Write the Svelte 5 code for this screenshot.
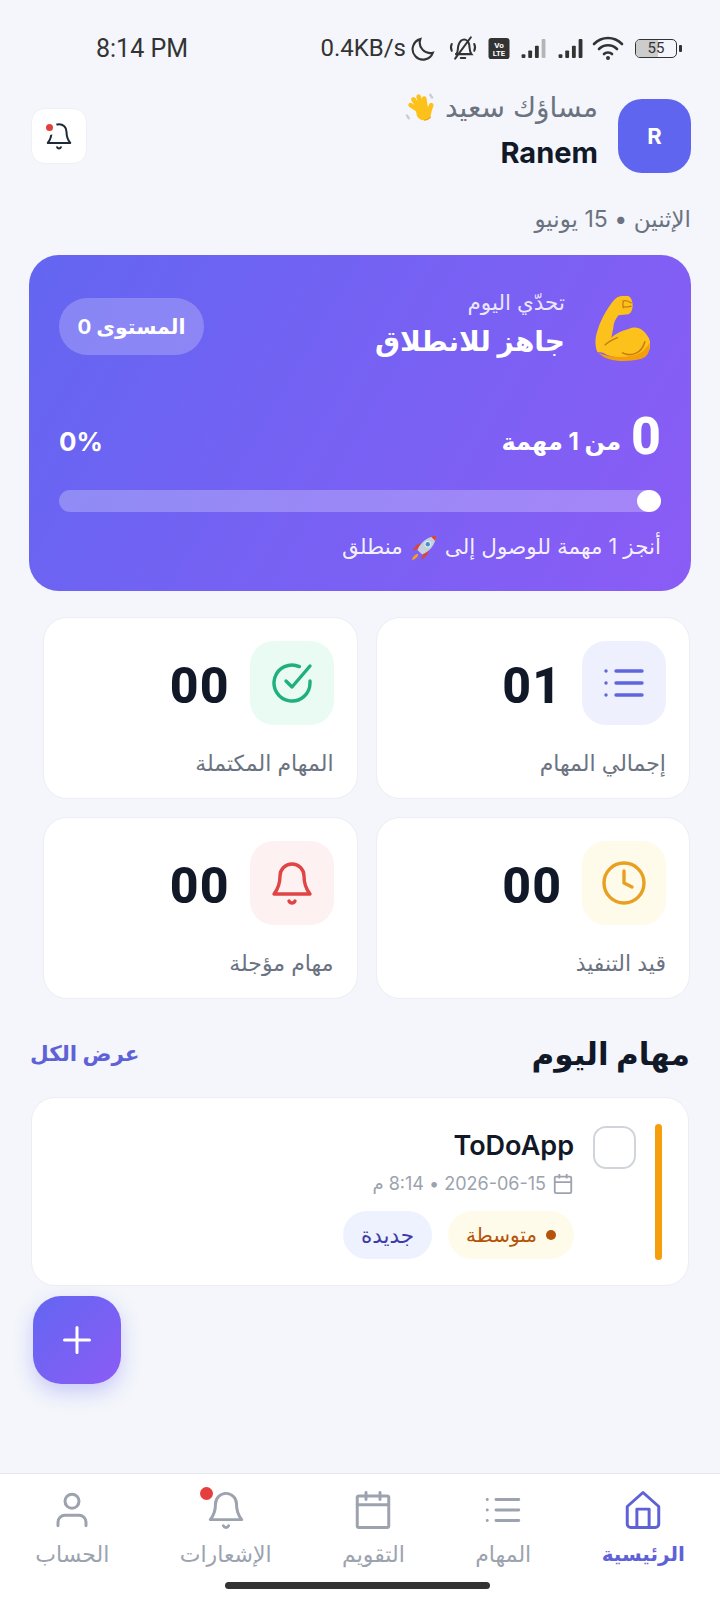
<script lang="ts">
	const stats = [
		{ label: 'إجمالي المهام', value: '01', tone: 'indigo', icon: 'list' },
		{ label: 'المهام المكتملة', value: '00', tone: 'green', icon: 'check' },
		{ label: 'قيد التنفيذ', value: '00', tone: 'amber', icon: 'clock' },
		{ label: 'مهام مؤجلة', value: '00', tone: 'red', icon: 'bell' }
	];

	const nav = [
		{ label: 'الرئيسية', icon: 'home', active: true },
		{ label: 'المهام', icon: 'list' },
		{ label: 'التقويم', icon: 'calendar' },
		{ label: 'الإشعارات', icon: 'bell', dot: true },
		{ label: 'الحساب', icon: 'user' }
	];
</script>

{#snippet glyph(name)}
	<svg class="glyph" viewBox="0 0 24 24" fill="none" stroke="currentColor" stroke-linecap="round" stroke-linejoin="round">
		{#if name === 'list'}
			<path d="M8 6h13M8 12h13M8 18h13" />
			<path d="M3 6h.01M3 12h.01M3 18h.01" />
		{:else if name === 'check'}
			<path d="M21 11v1a9 9 0 1 1-5.300-8.200" />
			<path d="M21 3.500 12 14l-3-3" />
		{:else if name === 'clock'}
			<circle cx="12" cy="12" r="10" />
			<path d="M12 6v6l4 2" />
		{:else if name === 'bell'}
			<path d="M18 8.500a6 6 0 0 0-12 0c0 4-1 6.500-3 9h18c-2-2.500-3-5-3-9z" />
			<path d="M10.500 21c.6 1.300 2.400 1.300 3 0" />
		{:else if name === 'home'}
			<path d="M3 10 12 2l9 8v10a2 2 0 0 1-2 2H5a2 2 0 0 1-2-2z" />
			<path d="M8.500 22V11.500h7V22" />
		{:else if name === 'calendar'}
			<rect x="3" y="4" width="18" height="18" rx="1" />
			<path d="M8 2v4M16 2v4M3 9h18" />
		{:else if name === 'user'}
			<path d="M20 21v-2a4 4 0 0 0-4-4H8a4 4 0 0 0-4 4v2" />
			<circle cx="12" cy="7" r="4" />
		{/if}
	</svg>
{/snippet}

{#snippet wave()}
	<svg class="emoji wave" viewBox="0 0 32 32" fill="none" stroke-linecap="round">
		<path d="M27 3l2 3M2 25l2 3" stroke="#c4cdd8" stroke-width="2.500" />
		<g stroke="#fcc21b" stroke-width="5">
			<path d="M17 21 6 14M17 19 9 8M19 18 14.500 5M22 18 20.500 7M25 23l3-9" />
		</g>
		<circle cx="20" cy="22" r="8" fill="#fcc21b" />
		<path d="M27 27c-2 2-4 3-6 3" stroke="#f0a30a" stroke-width="1.500" />
	</svg>
{/snippet}

{#snippet rocket()}
	<svg class="emoji rocket" viewBox="0 0 32 32">
		<path d="M9 17l-6 2 6-7 5-1zM15 23l-2 6 7-6 1-5z" fill="#d9453a" />
		<path d="M9 22c-3 1-5 3-6 7 4-1 6-3 7-6z" fill="#f7a21b" />
		<path d="M9 18C13 9 20 4 29 3c-1 9-6 16-15 20z" fill="#c3d1de" />
		<path d="M23 3.700c1.500 1 3.500 3 5 5 .5-2 .9-3.600 1-5.700-2 .1-4 .3-6 .7z" fill="#d9453a" />
		<circle cx="20" cy="12" r="3" fill="#4a90c8" stroke="#fff" stroke-width="1" />
	</svg>
{/snippet}

<div class="page" dir="rtl">
	<div class="status" dir="ltr">
		<span class="time">8:14 PM</span>
		<div class="status-right">
			<span class="speed">0.4KB/s</span>
			<svg class="st moon" viewBox="0 0 24 24" fill="none" stroke="#333" stroke-width="2"><path d="M9 3a10 10 0 1 0 12 13A10 10 0 0 1 9 3z" /></svg>
			<svg class="st mute" viewBox="0 0 28 24" fill="none" stroke="#333" stroke-width="1.800" stroke-linecap="round"><path d="M8 17c2-2 1-5 2-8s3-5 5-5 4 2 4.500 4.500 0 6 2 8.500H7zM12 20.500h4M21 2 7 21M4 8c-1 2-1 4 0 6M24 8c1 2 1 4 0 6" /></svg>
			<svg class="st volte" viewBox="0 0 22 22"><rect width="22" height="22" rx="3" fill="#333" /><text x="11" y="10" font-size="8.500" font-weight="700" text-anchor="middle" fill="#fff" font-family="Roboto">Vo</text><text x="11" y="19" font-size="8" font-weight="700" text-anchor="middle" fill="#fff" font-family="Roboto">LTE</text></svg>
			<svg class="st sig" viewBox="0 0 26 22" fill="#333"><rect x="0" y="17" width="4" height="4" rx="1" /><rect x="7" y="13" width="4" height="8" rx="1" /><rect x="14" y="8" width="4" height="13" rx="1" /><rect x="21" y="1" width="4" height="20" rx="1" fill="#b5b5b5" /></svg>
			<svg class="st sig" viewBox="0 0 26 22" fill="#333"><rect x="0" y="17" width="4" height="4" rx="1" /><rect x="7" y="13" width="4" height="8" rx="1" /><rect x="14" y="8" width="4" height="13" rx="1" /><rect x="21" y="1" width="4" height="20" rx="1" /></svg>
			<svg class="st wifi" viewBox="0 0 32 26" fill="none" stroke="#333" stroke-width="2.600" stroke-linecap="round"><path d="M2 9c8-8 20-8 28 0M7 14c5-5 13-5 18 0M12 19c2-2 6-2 8 0" /><circle cx="16" cy="23" r="2" fill="#333" stroke="none" /></svg>
			<div class="battery">
				<div class="cell"><span class="charge"></span><span class="pct">55</span></div>
				<span class="nub"></span>
			</div>
		</div>
	</div>

	<header class="top">
		<div class="avatar">R</div>
		<div class="hello">
			<div class="greet">مساؤك سعيد {@render wave()}</div>
			<div class="name">Ranem</div>
		</div>
		<button class="bell-btn" aria-label="الإشعارات">
			{@render glyph('bell')}
			<span class="bell-dot"></span>
		</button>
	</header>

	<p class="date">الإثنين • 15 يونيو</p>

	<section class="hero">
		<div class="hero-top">
			<svg class="muscle" viewBox="9 10 55 66">
				<path d="M12 66C10 60 10 55 11 50 13 42 17 30 27 17 30 13 33 11 36 11h7c3 2 4 6 4 9 0 4-1 7-4 9l-10 1c-3 4-5 8-5 12l-2 10c3-3 7-5 12-7 4-1 7-3 11-3 6 0 10 4 13 9 2 3 3 7 2 11-1 6-6 8-13 9-13 2-26 1-33-4z" fill="#fcc21b" />
				<path d="M12 66c8 5 20 6 33 4 6-1 12-3 15-8 2-2 3-3 3-6 1 3 1 6 0 9-1 6-6 8-13 9-13 2-26 1-33-4z" fill="#f59e0b" />
				<path d="M37 16c3-1 6 0 9 2M37 22c3 0 6 0 9-1M38 16c-1 2-1 4 0 7" stroke="#c97d10" stroke-width="1.200" fill="none" />
				<path d="M20 59c3-3 7-5 12-7M37 67c8 4 19 1 22-11" stroke="#c97d10" stroke-width="1.500" fill="none" stroke-linecap="round" />
			</svg>
			<div class="hero-title">
				<div class="hero-kicker">تحدّي اليوم</div>
				<div class="hero-head">جاهز للانطلاق</div>
			</div>
			<span class="level">المستوى 0</span>
		</div>

		<div class="hero-count">
			<div class="count"><b>0</b> <span>من 1 مهمة</span></div>
			<div class="percent" dir="ltr">0%</div>
		</div>

		<div class="track"><span class="knob"></span></div>

		<p class="hero-note">أنجز 1 مهمة للوصول إلى {@render rocket()} منطلق</p>
	</section>

	<section class="stats">
		{#each stats as s}
			<div class="stat">
				<div class="stat-row">
					<div class="stat-icon {s.tone}">{@render glyph(s.icon)}</div>
					<div class="stat-value" dir="ltr">{s.value}</div>
				</div>
				<div class="stat-label">{s.label}</div>
			</div>
		{/each}
	</section>

	<div class="section-head">
		<h2>مهام اليوم</h2>
		<span class="see-all">عرض الكل</span>
	</div>

	<div class="task">
		<span class="task-bar"></span>
		<span class="task-check"></span>
		<div class="task-body">
			<div class="task-title">ToDoApp</div>
			<div class="task-meta">
				<svg class="cal" viewBox="0 0 24 24" fill="none" stroke="currentColor" stroke-width="2"><rect x="3" y="4" width="18" height="18" rx="1.500" /><path d="M8 1v5M16 1v5M3 10h18" /></svg>
				<span>2026-06-15 • 8:14 م</span>
			</div>
			<div class="task-tags">
				<span class="tag medium"><i></i>متوسطة</span>
				<span class="tag fresh">جديدة</span>
			</div>
		</div>
	</div>

	<button class="fab" aria-label="إضافة">
		<svg viewBox="0 0 28 28" fill="none" stroke="#fff" stroke-width="3" stroke-linecap="round"><path d="M14 1.500v25M1.500 14h25" /></svg>
	</button>

	<nav class="nav">
		{#each nav as n}
			<div class="nav-item" class:active={n.active}>
				<div class="nav-icon">
					{@render glyph(n.icon)}
					{#if n.dot}<span class="nav-dot"></span>{/if}
				</div>
				<span class="nav-label">{n.label}</span>
			</div>
		{/each}
		<span class="home-bar"></span>
	</nav>
</div>

<style>
	:global(body) {
		margin: 0;
		background: #f4f6fb;
	}

	.page {
		position: relative;
		width: 720px;
		height: 1600px;
		overflow: hidden;
		background: #f4f6fb;
		font-family: Inter, 'DejaVu Sans', sans-serif;
		color: #111827;
	}

	.status {
		display: flex;
		justify-content: space-between;
		align-items: center;
		height: 30px;
		padding: 33px 38px 0 96px;
		font-family: Roboto, sans-serif;
		font-size: 24px;
		color: #333;
	}

	.time {
		font-size: 25px;
	}

	.status-right {
		display: flex;
		align-items: center;
		gap: 5px;
	}

	.st { display: block; }
	.moon { width: 25px; height: 25px; margin-right: 5px; }
	.mute { width: 34px; height: 27px; margin-right: 3px; }
	.volte { width: 22px; height: 21px; margin-right: 3px; }
	.sig { width: 32px; height: 21px; }
	.wifi { width: 32px; height: 26px; margin-right: 6px; }

	.battery {
		display: flex;
		align-items: center;
		gap: 2px;
	}

	.cell {
		position: relative;
		width: 40px;
		height: 17px;
		border: 1.500px solid #333;
		border-radius: 5px;
		overflow: hidden;
	}

	.charge {
		position: absolute;
		inset: 0 auto 0 0;
		width: 55%;
		background: #ccc;
	}

	.pct {
		position: relative;
		display: block;
		text-align: center;
		font-size: 15px;
		line-height: 17px;
	}

	.nub {
		width: 3px;
		height: 7px;
		background: #333;
		border-radius: 1px;
	}

	.top {
		display: flex;
		align-items: center;
		height: 74px;
		margin-top: 36px;
		padding: 0 29px 0 31px;
	}

	.avatar {
		display: flex;
		align-items: center;
		justify-content: center;
		width: 73px;
		height: 74px;
		border-radius: 24px;
		background: #5f65ee;
		color: #fff;
		font-weight: 700;
		font-size: 22px;
	}

	.hello {
		flex: 1;
		margin-right: 20px;
	}

	.greet {
		display: flex;
		align-items: center;
		gap: 9px;
		margin-top: -10px;
		font-size: 28px;
		line-height: 28px;
		color: #6b7280;
	}

	.emoji {
		display: inline-block;
		vertical-align: middle;
	}

	.wave {
		width: 32px;
		height: 30px;
	}

	.name {
		margin-top: 13px;
		font-size: 29px;
		line-height: 36px;
		font-weight: 700;
		direction: rtl;
	}

	.bell-btn {
		position: relative;
		display: flex;
		align-items: center;
		justify-content: center;
		width: 56px;
		height: 56px;
		padding: 0;
		border: 1px solid #eef0f4;
		border-radius: 14px;
		background: #fff;
		color: #1f2937;
	}

	.bell-btn .glyph {
		width: 30px;
		height: 30px;
		stroke-width: 1.600;
	}

	.bell-dot {
		position: absolute;
		top: 15px;
		left: 14px;
		width: 7px;
		height: 7px;
		border-radius: 50%;
		background: #e53e3e;
		box-shadow: 0 0 0 4px #fff;
	}

	.date {
		margin: 34px 29px 0;
		font-size: 23px;
		line-height: 24px;
		color: #6b7280;
	}

	.hero {
		margin: 24px 29px 0;
		height: 336px;
		box-sizing: border-box;
		padding: 38px 30px 0;
		border-radius: 30px;
		background: linear-gradient(120deg, #6366f1, #8b5cf6);
		color: #fff;
	}

	.hero-top {
		display: flex;
		align-items: center;
		height: 70px;
	}

	.muscle {
		width: 56px;
		height: 67px;
		margin-right: 11px;
		flex: none;
	}

	.hero-title {
		flex: 1;
		margin-right: 29px;
	}

	.hero-kicker {
		margin-top: -8px;
		font-size: 21.500px;
		line-height: 26px;
		color: rgba(255, 255, 255, 0.85);
	}

	.hero-head {
		margin-top: 8px;
		font-size: 28px;
		line-height: 36px;
		font-weight: 700;
	}

	.level {
		display: flex;
		align-items: center;
		justify-content: center;
		width: 145px;
		height: 57px;
		margin-top: -4px;
		border-radius: 29px;
		background: rgba(255, 255, 255, 0.22);
		font-size: 20.500px;
		font-weight: 700;
	}

	.hero-count {
		display: flex;
		justify-content: space-between;
		align-items: center;
		margin-top: 46px;
	}

	.count {
		display: flex;
		align-items: center;
		gap: 10px;
	}

	.count b {
		font-family: Roboto, sans-serif;
		font-size: 52px;
		line-height: 56px;
		font-weight: 800;
	}

	.count span {
		font-size: 24px;
		font-weight: 700;
		margin-top: 8px;
	}

	.percent {
		font-size: 26px;
		font-weight: 700;
		margin-top: 8px;
	}

	.track {
		position: relative;
		height: 22px;
		margin-top: 25px;
		border-radius: 11px;
		background: rgba(255, 255, 255, 0.25);
	}

	.knob {
		position: absolute;
		top: 0;
		right: 0;
		width: 24px;
		height: 22px;
		border-radius: 50%;
		background: #fff;
	}

	.hero-note {
		margin: 20px 0 0;
		font-size: 21.500px;
		line-height: 28px;
		color: rgba(255, 255, 255, 0.92);
	}

	.rocket {
		width: 30px;
		height: 30px;
	}

	.stats {
		display: grid;
		grid-template-columns: 1fr 1fr;
		gap: 18px;
		margin: 26px 30px 0 43px;
	}

	.stat {
		height: 182px;
		box-sizing: border-box;
		padding: 23px;
		border: 1px solid #eceef3;
		border-radius: 24px;
		background: #fff;
	}

	.stat-row {
		display: flex;
		align-items: center;
		gap: 20px;
	}

	.stat-icon {
		display: flex;
		align-items: center;
		justify-content: center;
		width: 84px;
		height: 84px;
		border-radius: 24px;
	}

	.stat-icon .glyph {
		width: 48px;
		height: 48px;
		stroke-width: 1.700;
	}

	.indigo { background: #eef0fd; color: #5f65dc; }
	.green { background: #e9fbf3; color: #1fb07e; }
	.amber { background: #fffbeb; color: #e8a020; }
	.red { background: #fef1f1; color: #e04444; }

	.stat-value {
		margin-top: 5px;
		font-family: Roboto, sans-serif;
		font-size: 50px;
		font-weight: 800;
		line-height: 60px;
		letter-spacing: 1px;
	}

	.stat-label {
		margin-top: 24px;
		font-size: 22px;
		line-height: 28px;
		color: #6b7280;
	}

	.section-head {
		display: flex;
		justify-content: space-between;
		align-items: center;
		margin: 34px 30px 0;
		height: 40px;
	}

	h2 {
		margin: 0;
		font-size: 31px;
		font-weight: 700;
	}

	.see-all {
		font-size: 21.500px;
		font-weight: 600;
		color: #5f62d6;
	}

	.task {
		position: relative;
		display: flex;
		height: 189px;
		box-sizing: border-box;
		margin: 24px 31px 0;
		padding: 26px 26px 0;
		border: 1px solid #eceef3;
		border-radius: 24px;
		background: #fff;
	}

	.task-bar {
		width: 7px;
		height: 136px;
		border-radius: 4px;
		background: #f59e0b;
		flex: none;
	}

	.task-check {
		width: 43px;
		height: 43px;
		box-sizing: border-box;
		margin: 2px 19px 0 0;
		border: 2px solid #d1d5db;
		border-radius: 13px;
		flex: none;
	}

	.task-body {
		margin-right: 19px;
	}

	.task-title {
		margin-top: 4px;
		font-size: 27px;
		line-height: 36px;
		font-weight: 600;
		direction: rtl;
	}

	.task-meta {
		display: flex;
		align-items: center;
		gap: 6px;
		margin-top: 7px;
		font-size: 18px;
		line-height: 26px;
		color: #9ca3af;
	}

	.cal {
		width: 22px;
		height: 22px;
	}

	.task-tags {
		display: flex;
		gap: 16px;
		margin-top: 14px;
	}

	.tag {
		display: flex;
		align-items: center;
		height: 48px;
		padding: 0 18px;
		border-radius: 24px;
		font-size: 20px;
	}

	.tag i {
		width: 10px;
		height: 10px;
		margin-left: 9px;
		border-radius: 50%;
		background: #b45309;
	}

	.medium { background: #fffbeb; color: #b45309; }
	.fresh { background: #eef2ff; color: #3f3aa8; font-size: 21.500px; }

	.fab {
		position: absolute;
		left: 33px;
		top: 1296px;
		display: flex;
		align-items: center;
		justify-content: center;
		width: 88px;
		height: 88px;
		padding: 0;
		border: none;
		border-radius: 28px;
		background: linear-gradient(135deg, #6366f1, #8b5cf6);
		box-shadow: 0 8px 20px rgba(99, 102, 241, 0.3);
	}

	.fab svg {
		width: 28px;
		height: 28px;
	}

	.nav {
		position: absolute;
		left: 0;
		right: 0;
		bottom: 0;
		display: flex;
		justify-content: space-around;
		height: 127px;
		box-sizing: border-box;
		padding-top: 15px;
		border-top: 1px solid #e5e7eb;
		background: #fff;
		color: #9ca3af;
		font-size: 22px;
	}

	.nav-item {
		display: flex;
		flex-direction: column;
		align-items: center;
		gap: 9px;
	}

	.nav-item.active {
		color: #5f62d6;
		font-weight: 700;
		font-size: 20px;
	}

	.nav-label {
		line-height: 28px;
	}

	.nav-icon {
		position: relative;
		width: 42px;
		height: 42px;
	}

	.nav-icon .glyph {
		width: 42px;
		height: 42px;
		stroke-width: 1.700;
	}

	.nav-dot {
		position: absolute;
		top: -2px;
		left: -5px;
		width: 13px;
		height: 13px;
		border-radius: 50%;
		background: #e53e3e;
	}

	.home-bar {
		position: absolute;
		left: 225px;
		bottom: 11px;
		width: 265px;
		height: 7px;
		border-radius: 4px;
		background: #333;
	}
</style>
